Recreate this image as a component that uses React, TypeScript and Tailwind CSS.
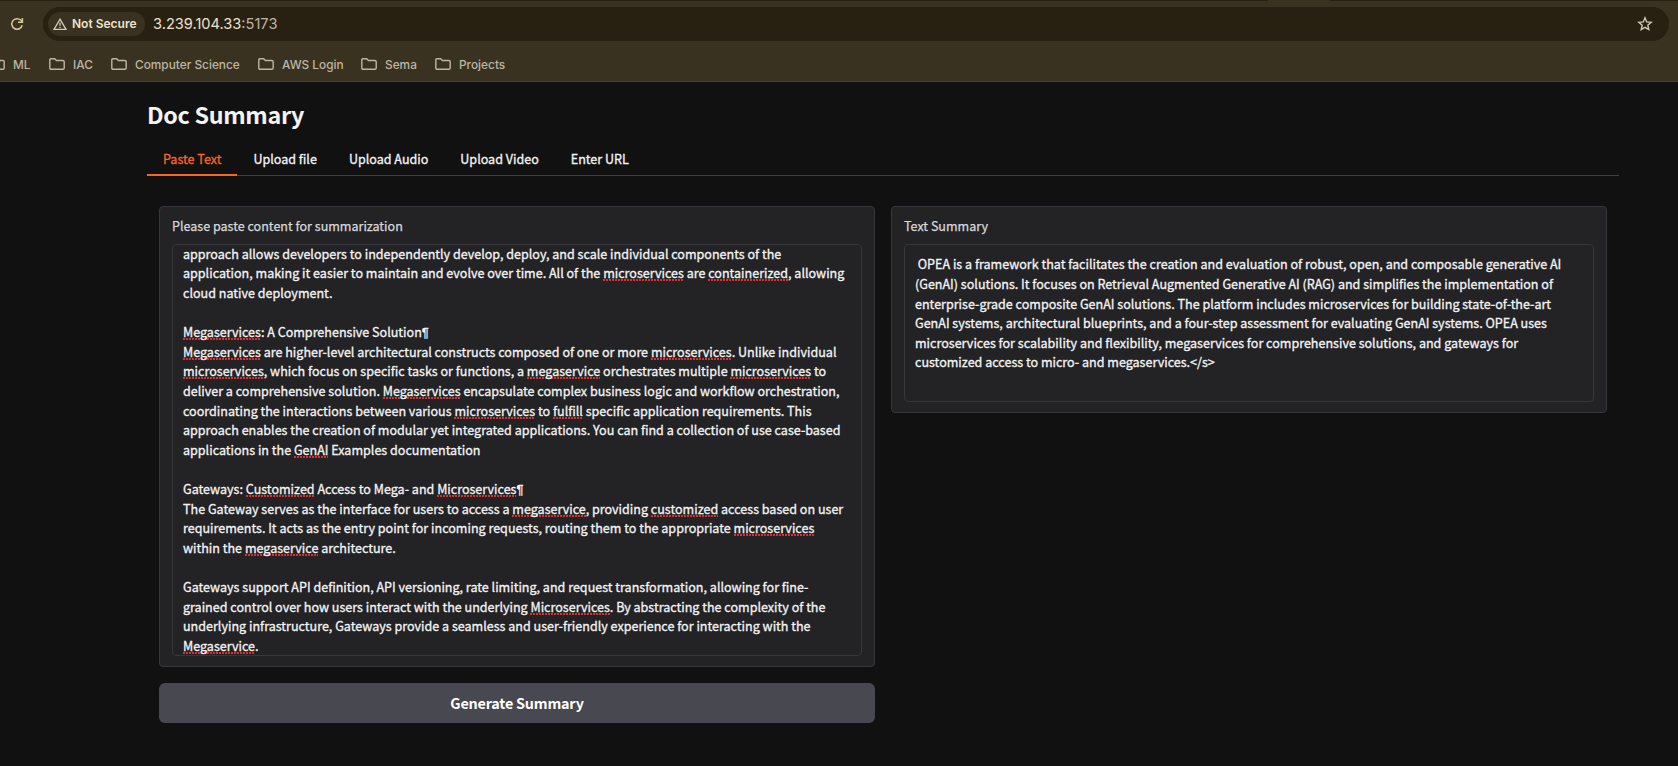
import React from "react";

const sans = "font-['Noto_Sans_CJK_SC','Noto_Sans',sans-serif]";

function Folder() {
  return (
    <svg width="16" height="12" viewBox="0 0 16 12" fill="none" stroke="#beb6a4" strokeWidth="1.4" className="shrink-0">
      <path d="M.8 10V2Q.8.8 2 .8h3.7l1.7 1.7h6.4q1.4 0 1.4 1.3v6.1q0 1.3-1.4 1.3H2Q.8 11.2.8 10Z" />
    </svg>
  );
}

const bookmarks = [
  { name: "ML", box: "w-[60px]" },
  { name: "IAC", box: "w-[62px]" },
  { name: "Computer Science", box: "w-[147px]" },
  { name: "AWS Login", box: "w-[103px]" },
  { name: "Sema", box: "w-[74px]" },
  { name: "Projects", box: "w-[80px]" },
];

const tabs = ["Paste Text", "Upload file", "Upload Audio", "Upload Video", "Enter URL"];

// Words wrapped in underscores are flagged by the spell checker.
const pasted = [
  "approach allows developers to independently develop, deploy, and scale individual components of the",
  "application, making it easier to maintain and evolve over time. All of the _microservices_ are _containerized_, allowing",
  "cloud native deployment.",
  "",
  "_Megaservices_: A Comprehensive Solution¶",
  "_Megaservices_ are higher-level architectural constructs composed of one or more _microservices_. Unlike individual",
  "_microservices_, which focus on specific tasks or functions, a _megaservice_ orchestrates multiple _microservices_ to",
  "deliver a comprehensive solution. _Megaservices_ encapsulate complex business logic and workflow orchestration,",
  "coordinating the interactions between various _microservices_ to _fulfill_ specific application requirements. This",
  "approach enables the creation of modular yet integrated applications. You can find a collection of use case-based",
  "applications in the _GenAI_ Examples documentation",
  "",
  "Gateways: _Customized_ Access to Mega- and _Microservices_¶",
  "The Gateway serves as the interface for users to access a _megaservice_, providing _customized_ access based on user",
  "requirements. It acts as the entry point for incoming requests, routing them to the appropriate _microservices_",
  "within the _megaservice_ architecture.",
  "",
  "Gateways support API definition, API versioning, rate limiting, and request transformation, allowing for fine-",
  "grained control over how users interact with the underlying _Microservices_. By abstracting the complexity of the",
  "underlying infrastructure, Gateways provide a seamless and user-friendly experience for interacting with the",
  "_Megaservice_.",
];

const summary = [
  " OPEA is a framework that facilitates the creation and evaluation of robust, open, and composable generative AI",
  "(GenAI) solutions. It focuses on Retrieval Augmented Generative AI (RAG) and simplifies the implementation of",
  "enterprise-grade composite GenAI solutions. The platform includes microservices for building state-of-the-art",
  "GenAI systems, architectural blueprints, and a four-step assessment for evaluating GenAI systems. OPEA uses",
  "microservices for scalability and flexibility, megaservices for comprehensive solutions, and gateways for",
  "customized access to micro- and megaservices.</s>",
];

function Plain({ text }: { text: string }) {
  if (!text.endsWith("¶")) return <span>{text}</span>;
  return (
    <span>
      {text.slice(0, -1)}
      <span className="font-['Liberation_Sans',sans-serif] text-[13px] leading-none">¶</span>
    </span>
  );
}

function Lines({ lines }: { lines: string[] }) {
  return (
    <>
      {lines.map((line, i) => (
        <div
          key={i}
          className="h-[19.6px] text-[12.55px] leading-[19.6px] whitespace-pre text-[#f4f4f5] [-webkit-text-stroke:0.3px_currentColor]"
        >
          {line.split("_").map((part, j) =>
            j % 2 ? (
              <span
                key={j}
                className="bg-[repeating-linear-gradient(90deg,#d93030_0_2px,transparent_2px_3px)] bg-[length:100%_2px] bg-[position:0_calc(100%-1px)] bg-no-repeat"
              >
                {part}
              </span>
            ) : (
              <Plain key={j} text={part} />
            ),
          )}
        </div>
      ))}
    </>
  );
}

function Label({ children }: { children: string }) {
  return (
    <div className="h-7 text-[12.55px] leading-[20px] text-[#d8d8dc] [-webkit-text-stroke:0.25px_currentColor]">
      {children}
    </div>
  );
}

export default function App() {
  return (
    <div className={`h-[766px] w-full overflow-hidden bg-[#111111] ${sans}`}>
      <header className="h-[82px] overflow-hidden border-b border-[#4a4231] bg-[#3a3221] font-['Inter',sans-serif]">
        <div className="flex h-px">
          <div className="flex-1 bg-[#282010]" />
          <div className="w-[62px]" />
          <div className="w-[348px] bg-[#282010]" />
        </div>
        <div className="mt-[6px] flex h-[34px] items-center">
          <svg width="14" height="14" viewBox="0 0 14 14" fill="none" stroke="#d8c69a" strokeWidth="1.5" className="ml-[10px] shrink-0">
            <path d="M12.2 8.3A5.3 5.3 0 1 1 10.9 3.3L12.2 4.8" />
            <path d="M12.4.9v4.3H8" />
          </svg>
          <div className="ml-[19px] flex h-[34px] w-[1626px] items-center rounded-full bg-[#282010] pl-[5px]">
            <div className="flex h-6 w-[97px] items-center rounded-full bg-[#3a3221] pl-[5px]">
              <svg width="14" height="12" viewBox="0 0 14 12" fill="none" stroke="#d3cbb8" strokeWidth="1.3">
                <path d="M7 1.2 13 11.3H1Z" />
                <path d="M7 4.5v3.3M7 8.7V10" />
              </svg>
              <span className="ml-[5px] text-[12px] font-semibold whitespace-nowrap text-[#ece3cf]">Not Secure</span>
            </div>
            <span className="ml-2 pt-[2px] text-[14.6px] whitespace-nowrap text-[#ece3cf]">
              3.239.104.33<span className="text-[#beb6a4]">:5173</span>
            </span>
            <svg width="16" height="16" viewBox="0 0 16 16" fill="none" stroke="#cfc6b3" strokeWidth="1.4" className="mr-4 ml-auto">
              <path d="m8 1.8 1.7 4.1 4.5.4-3.4 2.9 1 4.4L8 11.3l-3.8 2.3 1-4.4-3.4-2.9 4.5-.4Z" />
            </svg>
          </div>
        </div>
        <nav className="mt-[11px] -ml-[11px] flex h-6 items-center text-[11.85px] font-medium text-[#beb6a4]">
          {bookmarks.map((b) => (
            <div key={b.name} className={`flex h-6 shrink-0 items-center gap-2 whitespace-nowrap ${b.box}`}>
              <Folder />
              <span className="pt-px leading-[18px]">{b.name}</span>
            </div>
          ))}
        </nav>
      </header>

      <main className="pl-[147px]">
        <h1 className="h-[60px] pt-[14px] text-[23.3px] leading-[36px] font-bold tracking-[-0.33px] text-[#f4f4f5]">
          Doc Summary
        </h1>
        <div className="flex h-[34px] w-[1472px] border-b border-[#3f3f46]">
          {tabs.map((t, i) => (
            <div
              key={t}
              className={`h-[34px] shrink-0 px-4 text-[12.55px] leading-[33px] whitespace-nowrap [-webkit-text-stroke:0.3px_currentColor] ${
                i === 0 ? "border-b-2 border-[#f96620] text-[#f96620]" : "text-[#f4f4f5]"
              }`}
            >
              {t}
            </div>
          ))}
        </div>
        <div className="mt-[30px] ml-3 flex items-start gap-4">
          <div className="w-[716px]">
            <section className="h-[461px] rounded border border-[#36363c] bg-[#232325] px-3 pt-[9px]">
              <Label>Please paste content for summarization</Label>
              <div className="h-[412px] overflow-hidden rounded border border-[#36363c] pl-[10px]">
                <div className="-mt-[1.2px]">
                  <Lines lines={pasted} />
                </div>
              </div>
            </section>
            <button className="mt-4 block h-10 w-full rounded-md bg-[#484850] text-center text-[14.35px] leading-10 font-bold tracking-[-0.19px] text-white">
              Generate Summary
            </button>
          </div>
          <section className="h-[207px] w-[716px] rounded border border-[#36363c] bg-[#232325] px-3 pt-[9px]">
            <Label>Text Summary</Label>
            <div className="h-[158px] rounded border border-[#36363c] pt-[9.35px] pl-[10px]">
              <Lines lines={summary} />
            </div>
          </section>
        </div>
      </main>
    </div>
  );
}
